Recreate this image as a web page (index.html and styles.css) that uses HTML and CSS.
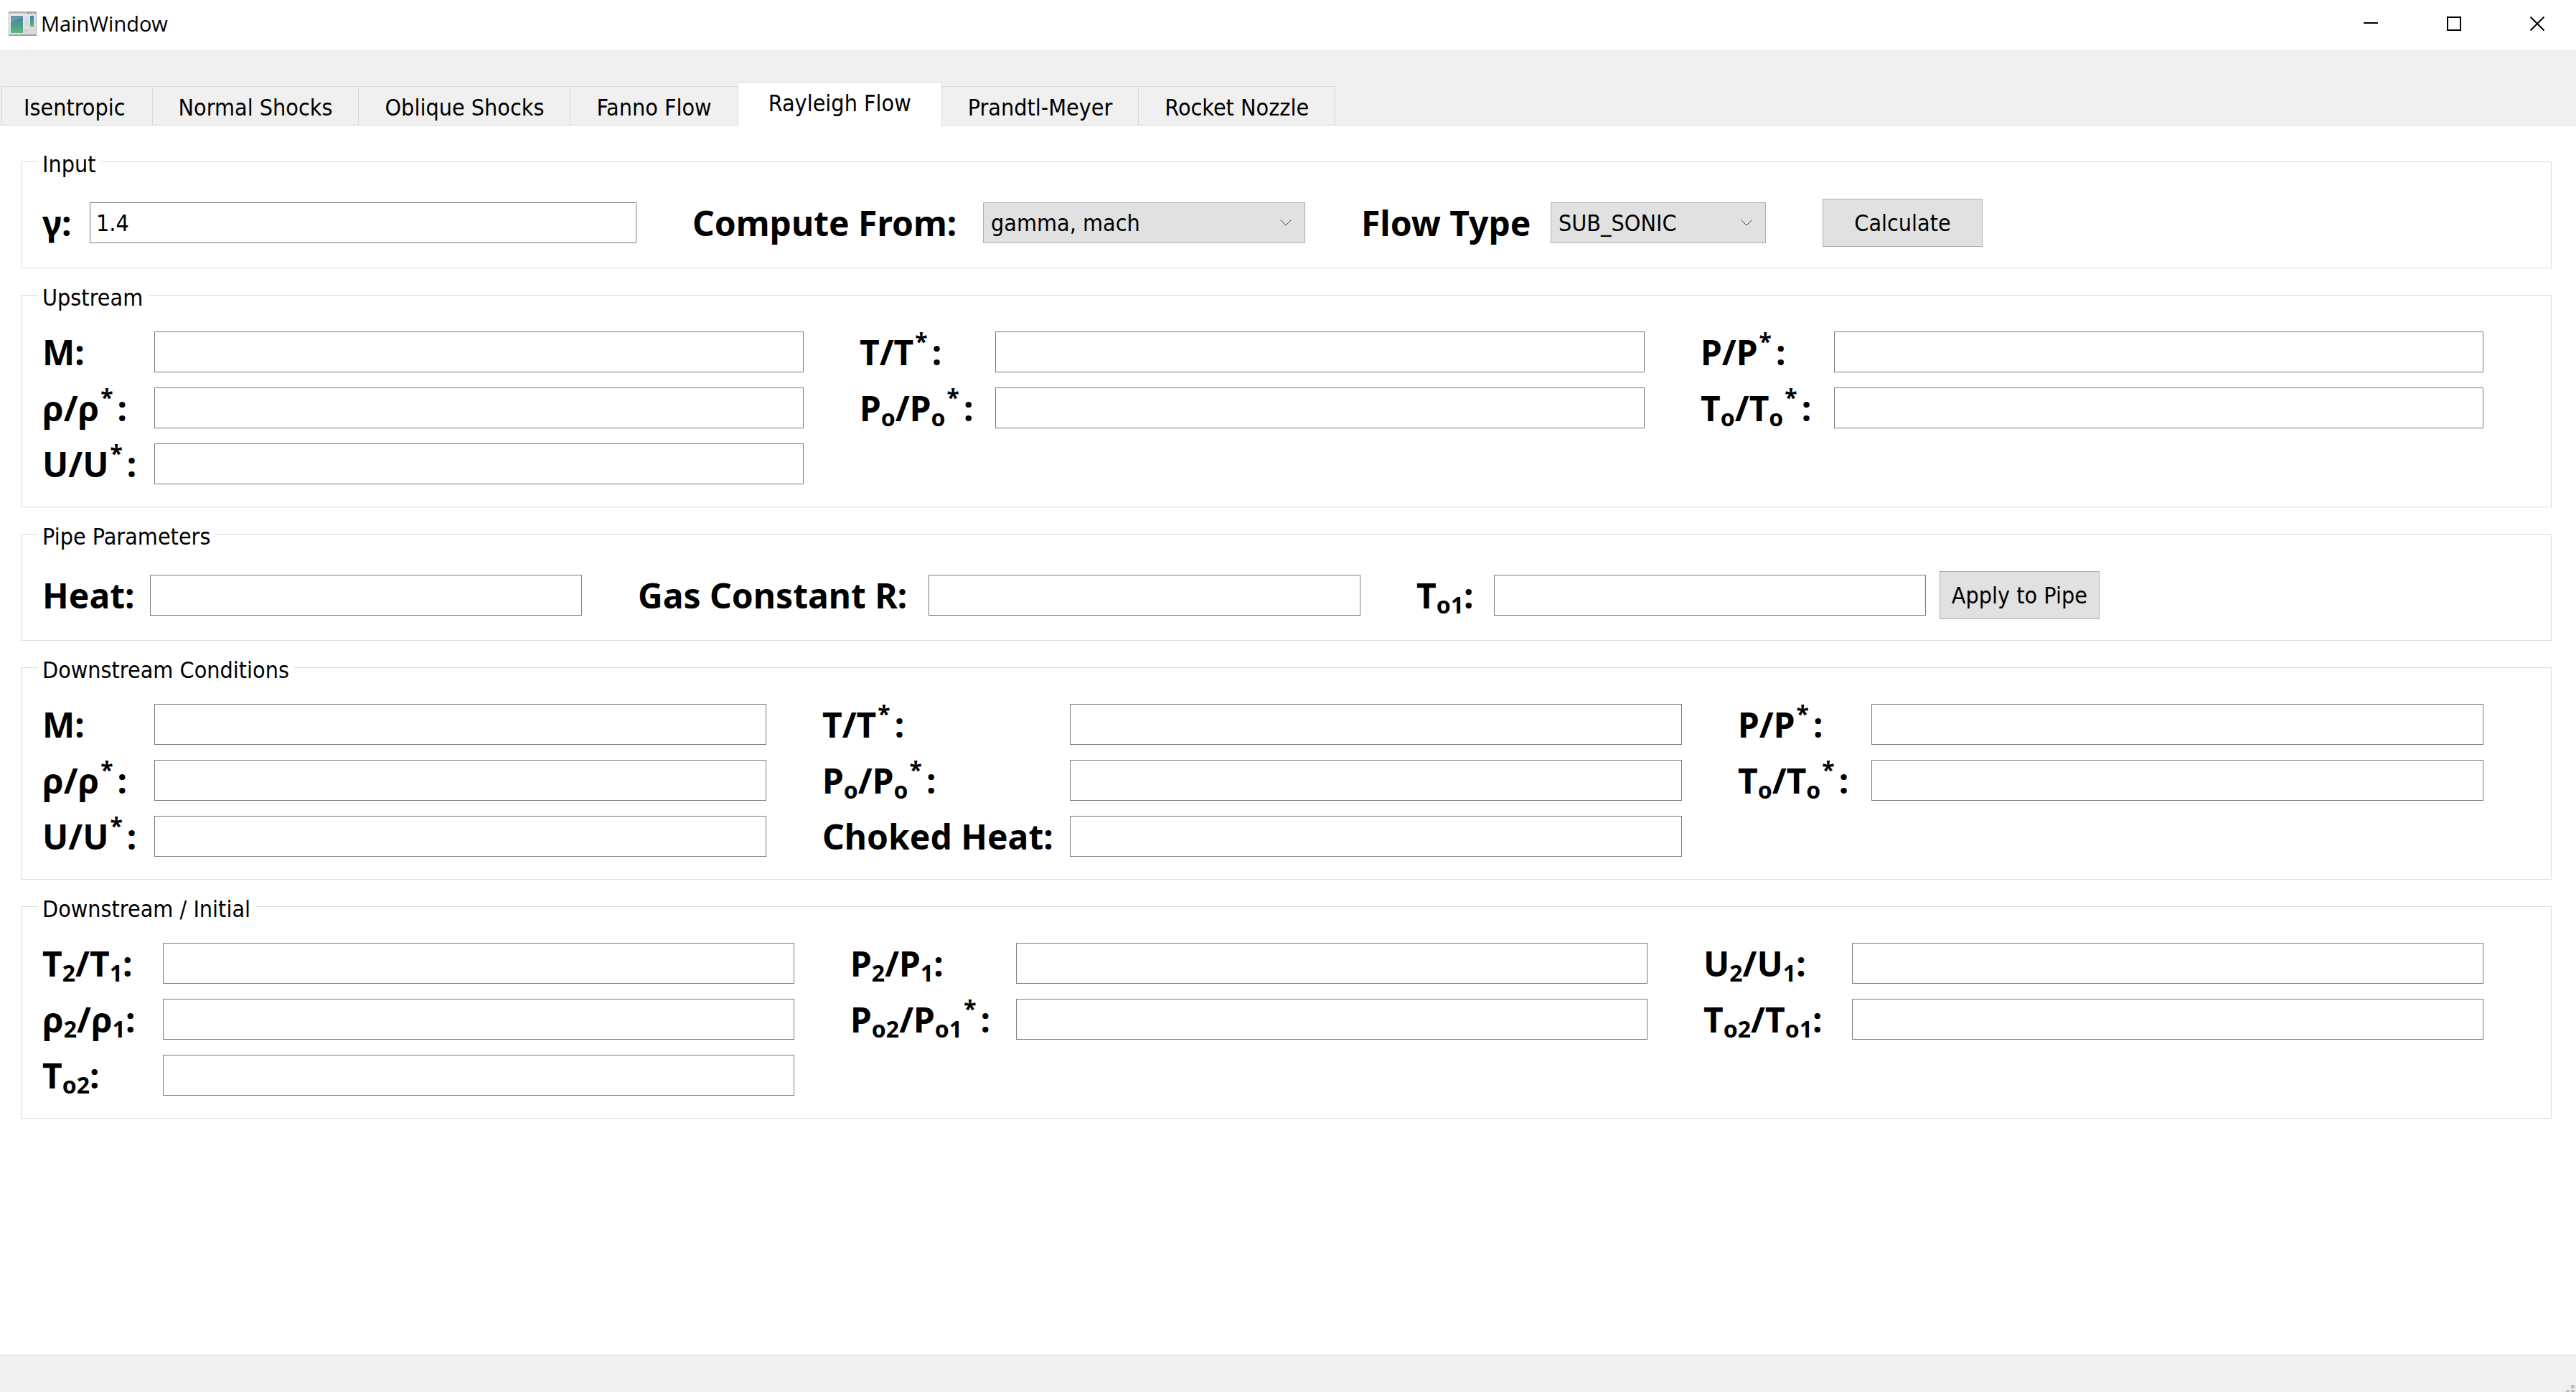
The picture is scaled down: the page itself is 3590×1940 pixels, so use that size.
FILE: index.html
```html
<!DOCTYPE html>
<html lang="en">
<head>
<meta charset="utf-8">
<title>MainWindow</title>
<link rel="stylesheet" href="styles.css">
</head>
<body>
<header class="titlebar">
  <svg class="app-icon" width="39" height="34" viewBox="0 0 39 34" aria-hidden="true">
    <defs>
      <linearGradient id="pane" x1="0" y1="0" x2="0" y2="1">
        <stop offset="0" stop-color="#4a7fa5"/>
        <stop offset="0.5" stop-color="#4a9a92"/>
        <stop offset="1" stop-color="#62b876"/>
      </linearGradient>
      <linearGradient id="frame" x1="0" y1="0" x2="1" y2="1">
        <stop offset="0" stop-color="#f6f6f6"/>
        <stop offset="1" stop-color="#d4d5d7"/>
      </linearGradient>
    </defs>
    <rect width="39" height="34" fill="#aeb0b3"/>
    <rect x="1" y="2" width="37" height="30" fill="url(#frame)"/>
    <rect x="1" y="2" width="37" height="2" fill="#cfd3dc"/>
    <path d="M26 2h3M31 2h2M35 2h2" stroke="#8b93a3" stroke-width="2"/>
    <rect x="3" y="6" width="17" height="24" fill="url(#pane)"/>
    <path d="M3 16C8 11 14 10 20 9V6H3Z" fill="#fff" opacity="0.15"/>
    <path d="M22 7h6M22 10h6M22 13h6M22 16h6M22 19h6M22 26h6M22 28h6" stroke="#c3c5c9" stroke-width="1"/>
    <rect x="30" y="6" width="5" height="15" fill="url(#pane)"/>
    <path d="M0 33h39" stroke="#8e9093" stroke-width="1"/>
  </svg>
  <h1 class="window-title">MainWindow</h1>
  <div class="window-buttons">
    <button type="button" aria-label="Minimize"><svg width="20" height="20" viewBox="0 0 20 20"><path d="M0 9h20"/></svg></button>
    <button type="button" aria-label="Maximize"><svg width="20" height="20" viewBox="0 0 20 20"><path d="M1 1h18v18H1Z"/></svg></button>
    <button type="button" aria-label="Close"><svg width="20" height="20" viewBox="0 0 20 20"><path d="M0.500 0.500l19 19M19.500 0.500l-19 19"/></svg></button>
  </div>
</header>

<nav class="tabs" role="tablist">
  <button type="button" class="tab" role="tab">Isentropic</button>
  <button type="button" class="tab" role="tab">Normal Shocks</button>
  <button type="button" class="tab" role="tab">Oblique Shocks</button>
  <button type="button" class="tab" role="tab">Fanno Flow</button>
  <button type="button" class="tab active" role="tab" aria-selected="true">Rayleigh Flow</button>
  <button type="button" class="tab" role="tab">Prandtl-Meyer</button>
  <button type="button" class="tab" role="tab">Rocket Nozzle</button>
</nav>

<main class="page">
  <fieldset class="group">
    <legend>Input</legend>
    <div class="line">
      <div class="form gamma">
        <label for="gamma">γ:</label><input id="gamma" type="text" value="1.4">
      </div>
      <div class="form compute">
        <label for="compute">Compute From:</label>
        <div class="combo">
          <select id="compute"><option>gamma, mach</option></select>
          <svg width="16" height="9" viewBox="0 0 16 9" aria-hidden="true"><path d="M0.500 0.500L8 8L15.500 0.500"/></svg>
        </div>
      </div>
      <div class="form flow">
        <label for="flow">Flow Type</label>
        <div class="combo">
          <select id="flow"><option>SUB_SONIC</option></select>
          <svg width="16" height="9" viewBox="0 0 16 9" aria-hidden="true"><path d="M0.500 0.500L8 8L15.500 0.500"/></svg>
        </div>
      </div>
      <button type="button" class="push apart">Calculate</button>
      <div class="rest-wide"></div>
    </div>
  </fieldset>

  <fieldset class="group">
    <legend>Upstream</legend>
    <div class="columns">
      <div class="form first">
        <label for="up-m">M:</label><input id="up-m" type="text">
        <label for="up-rho">ρ/ρ<sup>*</sup>:</label><input id="up-rho" type="text">
        <label for="up-u">U/U<sup>*</sup>:</label><input id="up-u" type="text">
      </div>
      <div class="form ratio">
        <label for="up-t">T/T<sup>*</sup>:</label><input id="up-t" type="text">
        <label for="up-po">P<sub>o</sub>/P<sub>o</sub><sup>*</sup>:</label><input id="up-po" type="text">
      </div>
      <div class="form last">
        <label for="up-p">P/P<sup>*</sup>:</label><input id="up-p" type="text">
        <label for="up-to">T<sub>o</sub>/T<sub>o</sub><sup>*</sup>:</label><input id="up-to" type="text">
      </div>
    </div>
  </fieldset>

  <fieldset class="group">
    <legend>Pipe Parameters</legend>
    <div class="line">
      <div class="form heat">
        <label for="heat">Heat:</label><input id="heat" type="text">
      </div>
      <div class="form gas">
        <label for="gas">Gas Constant R:</label><input id="gas" type="text">
      </div>
      <div class="form to1">
        <label for="to1">T<sub>o1</sub>:</label><input id="to1" type="text">
      </div>
      <button type="button" class="push">Apply to Pipe</button>
      <div class="rest"></div>
    </div>
  </fieldset>

  <fieldset class="group">
    <legend>Downstream Conditions</legend>
    <div class="columns">
      <div class="form first">
        <label for="dn-m">M:</label><input id="dn-m" type="text">
        <label for="dn-rho">ρ/ρ<sup>*</sup>:</label><input id="dn-rho" type="text">
        <label for="dn-u">U/U<sup>*</sup>:</label><input id="dn-u" type="text">
      </div>
      <div class="form choked">
        <label for="dn-t">T/T<sup>*</sup>:</label><input id="dn-t" type="text">
        <label for="dn-po">P<sub>o</sub>/P<sub>o</sub><sup>*</sup>:</label><input id="dn-po" type="text">
        <label for="dn-heat">Choked Heat:</label><input id="dn-heat" type="text">
      </div>
      <div class="form last">
        <label for="dn-p">P/P<sup>*</sup>:</label><input id="dn-p" type="text">
        <label for="dn-to">T<sub>o</sub>/T<sub>o</sub><sup>*</sup>:</label><input id="dn-to" type="text">
      </div>
    </div>
  </fieldset>

  <fieldset class="group">
    <legend>Downstream / Initial</legend>
    <div class="columns">
      <div class="form di-first">
        <label for="di-t">T<sub>2</sub>/T<sub>1</sub>:</label><input id="di-t" type="text">
        <label for="di-rho">ρ<sub>2</sub>/ρ<sub>1</sub>:</label><input id="di-rho" type="text">
        <label for="di-to2">T<sub>o2</sub>:</label><input id="di-to2" type="text">
      </div>
      <div class="form di-middle">
        <label for="di-p">P<sub>2</sub>/P<sub>1</sub>:</label><input id="di-p" type="text">
        <label for="di-po">P<sub>o2</sub>/P<sub>o1</sub><sup>*</sup>:</label><input id="di-po" type="text">
      </div>
      <div class="form di-last">
        <label for="di-u">U<sub>2</sub>/U<sub>1</sub>:</label><input id="di-u" type="text">
        <label for="di-to">T<sub>o2</sub>/T<sub>o1</sub>:</label><input id="di-to" type="text">
      </div>
    </div>
  </fieldset>
</main>

<footer class="statusbar">
  <svg width="14" height="10" viewBox="0 0 14 10" aria-hidden="true"><path d="M7 0h5v5H7ZM0 7h5v3H0ZM7 7h5v3H7Z"/></svg>
</footer>
</body>
</html>
```
FILE: styles.css
```css
* {
  box-sizing: border-box;
}

body {
  margin: 0;
  min-height: 100vh;
  display: flex;
  flex-direction: column;
  background: #fff;
  color: #000;
  font: 32px/38px "DejaVu Sans Condensed", "Noto Sans", sans-serif;
}

button,
input,
select {
  font: inherit;
  color: inherit;
  border-radius: 0;
  margin: 0;
}

/* Title bar */
.titlebar {
  display: flex;
  align-items: center;
  height: 69px;
  padding: 0 0 3px 12px;
}

.window-title {
  flex: 1;
  margin: 0 0 0 6px;
  font: 29px/38px "Open Sans", "Noto Sans", sans-serif;
}

.window-buttons {
  display: flex;
  gap: 8px;
}

.window-buttons button {
  display: flex;
  align-items: center;
  justify-content: center;
  width: 108px;
  height: 66px;
  padding: 0;
  border: 0;
  background: none;
}

.window-buttons svg {
  fill: none;
  stroke: #000;
  stroke-width: 2;
}

/* Tabs */
.tabs {
  display: flex;
  align-items: flex-end;
  padding: 45px 0 0 2px;
  background: #f0f0f0;
  box-shadow: inset 0 -1px #d9d9d9;
}

.tab {
  height: 55px;
  padding: 4px 36px 0;
  border: 1px solid #d9d9d9;
  border-left-width: 0;
  background: #f0f0f0;
}

.tab:first-child {
  padding: 4px 37px 0 30px;
  border-left-width: 1px;
}

.tab.active {
  height: 61px;
  padding: 0 42px 2px;
  border-bottom: 0;
  background: #fff;
}

/* Group boxes */
.page {
  flex: 1;
  display: flex;
  flex-direction: column;
  gap: 14px;
  padding: 27px 34px 27px 29px;
}

.group {
  min-width: 0;
  margin: 0;
  padding: 0 94px 29px 29px;
  border: 1px solid #dcdcdc;
}

.group legend {
  margin-left: -6px;
  padding: 8px 7px 0 6px;
}

.line {
  display: flex;
  align-items: center;
  padding-top: 29px;
}

.columns {
  display: flex;
  align-items: flex-start;
  padding: 28px 0 2px;
}

.form {
  display: grid;
  grid-template-columns: var(--label) 1fr;
  grid-auto-rows: 57px;
  row-gap: 21px;
  align-items: center;
  flex: 1 1 var(--label);
  min-width: 0;
}

.form + .form {
  margin-left: 78px;
}

.form label {
  font: bold 48px/59px "Noto Sans", sans-serif;
  white-space: nowrap;
}

.form sub,
.form sup {
  font-size: 32px;
  line-height: 0;
}

.form sub {
  vertical-align: -7px;
}

.form sup {
  margin: 0 6px 0 2px;
  vertical-align: 21px;
}

.form input,
.form select {
  width: 100%;
  min-width: 0;
  height: 57px;
  padding: 0 10px;
  border: 1px solid #7a7a7a;
  background: #fff;
}

.form input {
  padding: 0 8px;
}

.combo {
  display: grid;
  align-items: center;
}

.combo select,
.combo svg {
  grid-area: 1 / 1;
}

.combo select {
  appearance: none;
  border-color: #adadad;
  background: #e1e1e1;
}

.combo svg {
  justify-self: end;
  margin-right: 19px;
  fill: none;
  stroke: #444;
  pointer-events: none;
}

.push {
  width: 223px;
  height: 67px;
  margin-left: 19px;
  padding: 0;
  border: 1px solid #adadad;
  background: #e1e1e1;
}

.push.apart {
  margin-left: 79px;
}

/* Label column widths and shares of the free space */
.gamma { --label: 66px; flex-grow: 762; }
.compute { --label: 405px; flex-grow: 449; }
.flow { --label: 264px; flex-grow: 300; }
.rest-wide { flex: 698 1 0; }

.heat { --label: 150px; flex-grow: 9; }
.gas { --label: 405px; flex-grow: 9; }
.to1 { --label: 108px; flex-grow: 9; }
.rest { flex: 8 1 0; }

.first { --label: 156px; }
.ratio { --label: 189px; }
.choked { --label: 345px; }
.last { --label: 186px; }

.di-first { --label: 168px; }
.di-middle { --label: 231px; }
.di-last { --label: 207px; }

/* Status bar */
.statusbar {
  display: flex;
  align-items: flex-end;
  justify-content: flex-end;
  height: 52px;
  border-top: 1px solid #d7d7d7;
  background: #f0f0f0;
}

.statusbar svg {
  fill: #bfbfbf;
}
```
